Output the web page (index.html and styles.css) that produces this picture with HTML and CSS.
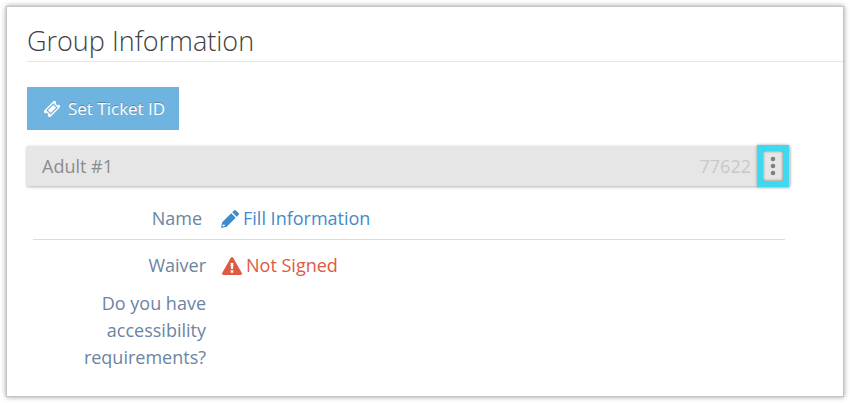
FILE: index.html
```
<!DOCTYPE html>
<html lang="en">

<head>
    <meta charset="UTF-8">
    <meta name="viewport" content="width=device-width, initial-scale=1.0">
    <title>Group Information</title>
    <link rel="stylesheet" href="styles.css">
</head>

<body>
    <main class="page">
        <section class="panel">
            <h1 class="title">Group Information</h1>

            <div class="content">
                <button type="button" class="ticket-button">
                    <svg class="ticket-icon" viewBox="0 0 16 16" aria-hidden="true">
                        <g transform="rotate(-45 8 8)">
                            <path fill="currentColor" fill-rule="evenodd" d="M0 3.500h16v2.700a1.800 1.800 0 0 0 0 3.600v2.700H0V9.800a1.800 1.800 0 0 0 0-3.600zM3 4.900v6.200h10V4.900z"/>
                            <path fill="currentColor" d="M4.200 6h7.600v4H4.200z"/>
                        </g>
                    </svg>
                    Set Ticket ID
                </button>

                <div class="guest-bar">
                    <span class="guest-name">Adult #1</span>
                    <span class="guest-id">77622</span>
                    <button type="button" class="menu-button" aria-label="More options">
                        <svg class="dots-icon" viewBox="0 0 6 20" aria-hidden="true">
                            <circle cx="3" cy="3" r="2.300"/>
                            <circle cx="3" cy="10" r="2.300"/>
                            <circle cx="3" cy="17" r="2.300"/>
                        </svg>
                    </button>
                </div>

                <dl class="details">
                    <div class="row row-name">
                        <dt>Name</dt>
                        <dd>
                            <a href="#" class="fill-link">
                                <svg class="pencil-icon" viewBox="0 0 18 18" aria-hidden="true">
                                    <path fill="currentColor" fill-rule="evenodd" d="M0 18l1.200-5.700L10.200 3.300l4.500 4.500-9 9zM1.900 14.200l-.5 2.400 2.400-.5v-1.400H2.500zM11.200 2.300l1.800-1.800q.9-.9 1.900 0l2.600 2.600q.9 1 0 1.900l-1.800 1.800z"/>
                                </svg>
                                Fill Information
                            </a>
                        </dd>
                    </div>
                    <div class="row row-waiver">
                        <dt>Waiver</dt>
                        <dd class="not-signed">
                            <svg class="warning-icon" viewBox="0 0 20 18" aria-hidden="true">
                                <path fill="currentColor" fill-rule="evenodd" d="M8.800.8q1.200-1.600 2.400 0l8.600 15.200q.7 1.800-1.200 2H1.400q-1.900-.2-1.200-2zM8.600 6l.4 6h2l.4-6zM8.700 13.300v2.400h2.600v-2.400z"/>
                            </svg>
                            Not Signed
                        </dd>
                    </div>
                    <div class="row">
                        <dt>Do you have accessibility requirements?</dt>
                        <dd></dd>
                    </div>
                </dl>
            </div>
        </section>
    </main>
</body>

</html>
```

FILE: styles.css
```
body {
    margin: 0;
    background-color: #fff;
    color: #6c84a3;
    font-family: "Open Sans", sans-serif;
    font-size: 18px;
    line-height: 27px;
}

.page {
    padding: 6px;
}

.panel {
    padding: 16px 0 25px 20px;
    border: 1px solid #c4c4c4;
    background-color: #fff;
    box-shadow: 0 0 5px rgba(0, 0, 0, 0.4);
}

.title {
    margin: 0;
    padding-bottom: 2px;
    border-bottom: 1px solid #e5e5e5;
    color: #404040;
    font-size: 27px;
    font-weight: 300;
    line-height: 36px;
}

.content {
    margin-right: 53px;
    padding-top: 25px;
}

.ticket-button {
    display: flex;
    align-items: center;
    gap: 8px;
    padding: 8px 14px 8px 17px;
    border: 0;
    background-color: #6fb3e0;
    color: #fff;
    font: inherit;
    font-size: 17px;
    text-shadow: 0 -1px 0 rgba(0, 0, 0, 0.25);
    cursor: pointer;
}

.ticket-icon {
    width: 16px;
    height: 16px;
}

.guest-bar {
    display: flex;
    align-items: center;
    margin-top: 16px;
    padding-left: 15px;
    background-color: #e6e6e6;
    box-shadow: 0 1px 3px rgba(0, 0, 0, 0.3);
    color: #8c8c8c;
}

.guest-id {
    margin-left: auto;
    color: #c8c8c8;
}

.menu-button {
    display: flex;
    align-items: center;
    justify-content: center;
    width: 32px;
    height: 42px;
    margin: -1px 1px -1px 6px;
    padding: 0;
    border: 6px solid #3dd9f0;
    background-color: #e6e6e6;
    box-shadow: 0 0 3px rgba(0, 0, 0, 0.3), inset 0 0 3px rgba(0, 0, 0, 0.5);
    cursor: pointer;
}

.dots-icon {
    width: 6px;
    height: 20px;
    fill: #808080;
}

.details {
    margin: 19px 5px 0 6px;
}

.row {
    display: grid;
    grid-template-columns: 173px 1fr;
    gap: 16px;
}

.row dt {
    padding-left: 40px;
    text-align: right;
}

.row dd {
    margin: 0;
}

.row-name {
    grid-template-columns: 169px 1fr;
    gap: 19px;
    padding-bottom: 7px;
    border-bottom: 1px solid #dcdcdc;
}

.row-waiver {
    padding: 12px 0 11px;
}

.fill-link,
.not-signed {
    display: flex;
    align-items: center;
    gap: 4px;
}

.fill-link {
    color: #428bca;
    text-decoration: none;
}

.not-signed {
    color: #dd5a43;
}

.pencil-icon {
    width: 18px;
    height: 18px;
}

.warning-icon {
    width: 20px;
    height: 18px;
}
```
